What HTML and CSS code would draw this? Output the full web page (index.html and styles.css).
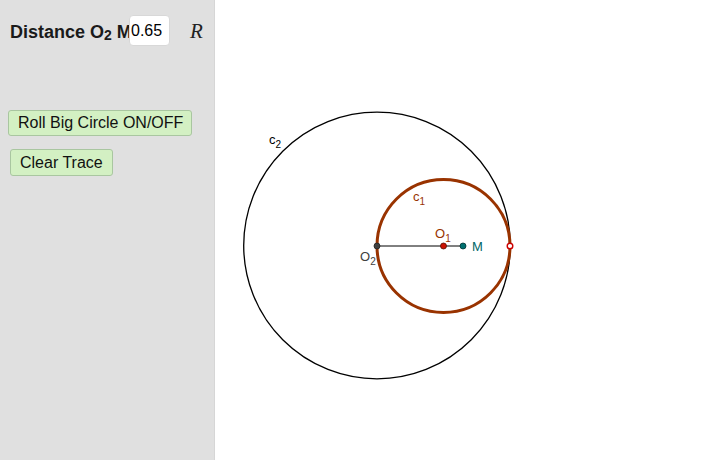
FILE: index.html
```html
<!DOCTYPE html>
<html>
<head>
<meta charset="utf-8">
<link rel="stylesheet" href="styles.css">
</head>
<body>
<div class="app">
  <div class="panel">
    <div class="slider-row">
      <div class="label">Distance O<span class="sub">2</span> M</div>
      <div class="input">0.65</div>
      <div class="var">R</div>
    </div>
    <div class="buttons">
      <button class="btn btn-roll">Roll Big Circle ON/OFF</button>
      <button class="btn btn-clear">Clear Trace</button>
    </div>
  </div>
  <svg class="canvas" viewBox="215 0 503 460" width="503" height="460" xmlns="http://www.w3.org/2000/svg">
    <circle cx="377" cy="245.5" r="133.3" fill="none" stroke="#000" stroke-width="1.3"/>
    <circle cx="443.5" cy="246" r="66.5" fill="none" stroke="#993300" stroke-width="3"/>
    <line x1="377" y1="246" x2="463" y2="246" stroke="#000" stroke-width="1"/>
    <circle cx="377" cy="246" r="3" fill="#404040" stroke="#222" stroke-width="0.8"/>
    <circle cx="443.5" cy="246" r="3" fill="#cc1100" stroke="#551100" stroke-width="0.8"/>
    <circle cx="463" cy="246" r="3" fill="#007070" stroke="#003333" stroke-width="0.8"/>
    <circle cx="510" cy="246" r="2.8" fill="#fff" stroke="#cc0000" stroke-width="1.4"/>
    <text class="lbl" x="269" y="144" fill="#000">c<tspan class="lsub" dy="4">2</tspan></text>
    <text class="lbl" x="413" y="201" fill="#993300">c<tspan class="lsub" dy="4">1</tspan></text>
    <text class="lbl" x="435" y="238" fill="#993300">O<tspan class="lsub" dy="4">1</tspan></text>
    <text class="lbl" x="472" y="251" fill="#006666">M</text>
    <text class="lbl" x="360" y="261" fill="#404040">O<tspan class="lsub" dy="4">2</tspan></text>
  </svg>
</div>
</body>
</html>
```
FILE: styles.css
```css
html, body {
  margin: 0;
  padding: 0;
  background: #fff;
}
.app {
  display: flex;
  width: 718px;
  height: 460px;
  overflow: hidden;
}
.panel {
  width: 214px;
  height: 460px;
  background: #e0e0e0;
  border-right: 1px solid #d6d6d6;
  flex-shrink: 0;
  font-family: "Liberation Sans", Arial, sans-serif;
}
.slider-row {
  display: flex;
  align-items: center;
  padding: 15px 0 0 10px;
  height: 31px;
}
.label {
  width: 119px;
  flex-shrink: 0;
  white-space: nowrap;
  font-weight: bold;
  font-size: 18px;
  color: #1a1a1a;
  padding-top: 4px;
}
.sub {
  font-size: 14px;
  position: relative;
  top: 2px;
}
.input {
  position: relative;
  z-index: 1;
  width: 38px;
  height: 29px;
  background: #fff;
  border: 1px solid #d8d8d8;
  border-radius: 4px;
  font-size: 16px;
  line-height: 30px;
  padding-left: 1px;
  color: #000;
}
.var {
  margin-left: 20px;
  padding-top: 2px;
  font-family: "Liberation Serif", "Times New Roman", serif;
  font-style: italic;
  font-size: 21px;
  color: #222;
}
.buttons {
  display: flex;
  flex-direction: column;
  align-items: flex-start;
  padding-top: 64px;
}
.btn {
  font-family: "Liberation Sans", Arial, sans-serif;
  font-size: 16px;
  color: #111;
  background: #d3f0c3;
  border: 1px solid #a9c6a0;
  border-radius: 3px;
  height: 26px;
  padding: 0 9px;
  margin: 0;
  line-height: 24px;
  white-space: nowrap;
  text-align: left;
  box-sizing: border-box;
}
.btn-roll {
  margin-left: 8px;
  width: 184px;
}
.btn-clear {
  margin-left: 10px;
  margin-top: 13px;
  width: 103px;
  height: 27px;
}
.canvas {
  display: block;
  flex-shrink: 0;
}
.lbl {
  font-family: "Liberation Sans", Arial, sans-serif;
  font-size: 13px;
}
.lsub {
  font-size: 10px;
}
```
